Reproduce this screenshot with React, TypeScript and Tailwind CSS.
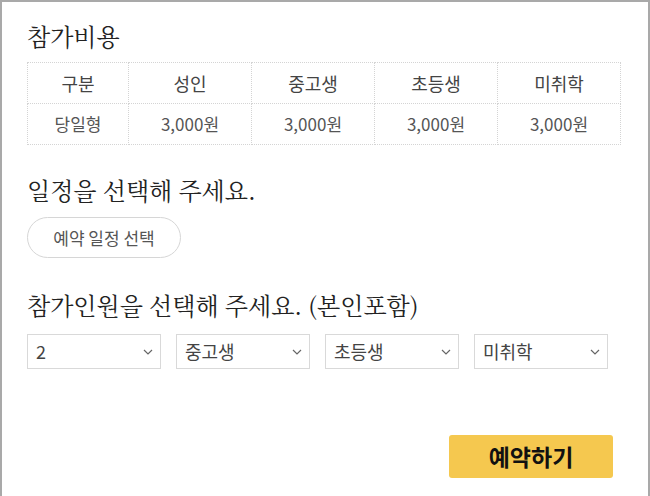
import React from "react";

const sans = "font-['Noto_Sans_CJK_KR','Noto_Sans',sans-serif]";
const serif = "font-['Noto_Serif_CJK_KR','Liberation_Serif','Noto_Sans_CJK_KR',serif]";

const heads = ["구분", "성인", "중고생", "초등생", "미취학"];
const row = ["당일형", "3,000원", "3,000원", "3,000원", "3,000원"];
const selects = ["2", "중고생", "초등생", "미취학"];

function Chevron() {
  return (
    <svg width="12" height="12" viewBox="0 0 12 12" className="pointer-events-none absolute right-[7px] top-[12px]">
      <path d="M2 4l4 4 4-4" fill="none" stroke="#666" strokeWidth="1.2" />
    </svg>
  );
}

export default function App() {
  return (
    <div className={`w-[650px] h-[496px] bg-white border-l-2 border-t-2 border-r-2 border-[#a9a9a9] pl-[25px] pt-[18px] flex flex-col ${sans}`}>
      <h2 className={`text-[24px] leading-[32px] text-[#222] ${serif}`}>참가비용</h2>

      <table className="mt-[10px] w-[593px] table-fixed border-collapse">
        <thead>
          <tr>
            {heads.map((h, i) => (
              <th
                key={h}
                className={`h-[41px] border border-dotted border-[#d4d4d4] text-[18px] font-normal text-[#444] ${i === 0 ? "w-[101px]" : "w-[123px]"}`}
              >
                {h}
              </th>
            ))}
          </tr>
        </thead>
        <tbody>
          <tr>
            {row.map((c, i) => (
              <td key={i} className="h-[41px] border border-dotted border-[#d4d4d4] text-center text-[17px] text-[#555]">
                {c}
              </td>
            ))}
          </tr>
        </tbody>
      </table>

      <h2 className={`mt-[29px] text-[24px] leading-[32px] text-[#222] ${serif}`}>일정을 선택해 주세요.</h2>

      <button className="mt-[11px] w-[154px] h-[41px] rounded-full border border-[#d6d6d6] text-[17px] text-[#555]">
        예약 일정 선택
      </button>

      <h2 className={`mt-[31px] text-[24px] leading-[32px] text-[#222] ${serif}`}>참가인원을 선택해 주세요. (본인포함)</h2>

      <div className="mt-[13px] flex gap-[15px]">
        {selects.map((s) => (
          <div key={s} className="relative w-[134px]">
            <select
              defaultValue={s}
              className="appearance-none w-full h-[35px] border border-[#d9d9d9] bg-white pl-[8px] text-[18px] text-[#444] outline-none"
            >
              <option value={s}>{s}</option>
            </select>
            <Chevron />
          </div>
        ))}
      </div>

      <div className="mt-[66px] flex justify-end pr-[35px]">
        <button className="w-[164px] h-[43px] rounded-[3px] bg-[#f5c84f] text-[23px] font-bold text-[#111]">
          예약하기
        </button>
      </div>
    </div>
  );
}
